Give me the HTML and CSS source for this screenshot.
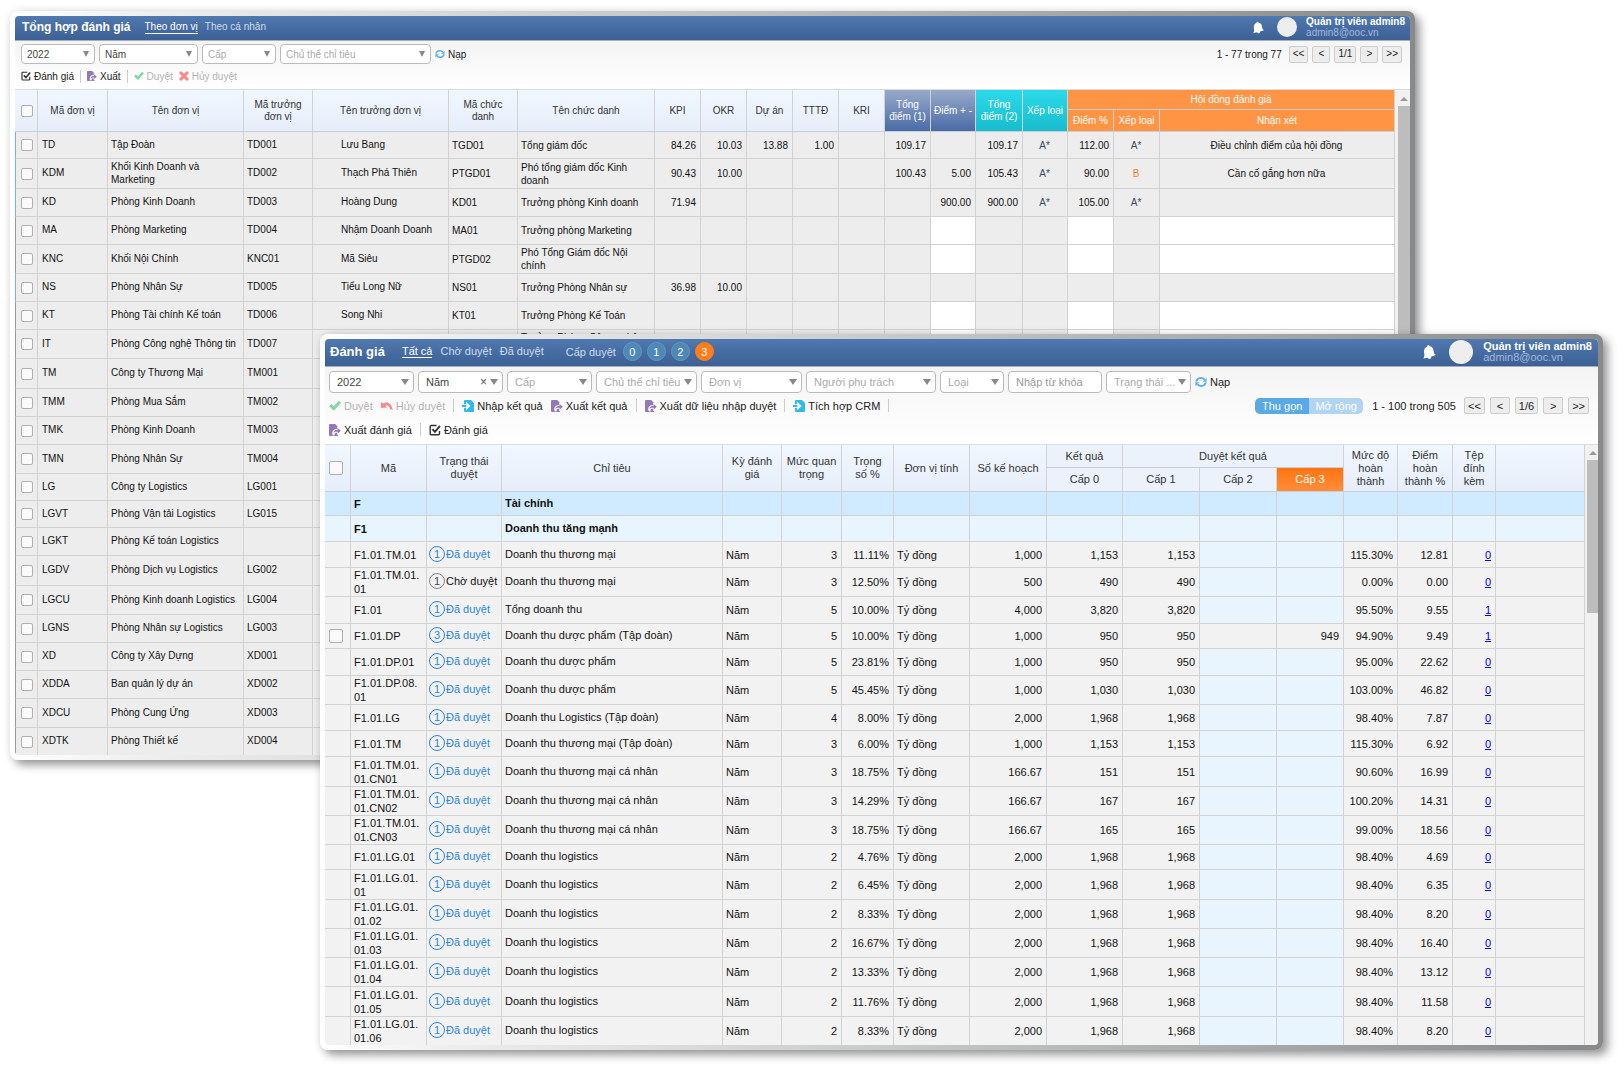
FILE: index.html
```html
<!DOCTYPE html>
<html lang="vi">
<head>
<meta charset="utf-8">
<title>Đánh giá</title>
<link rel="stylesheet" href="styles.css">
</head>
<body>
<svg class="sprite" aria-hidden="true">
  <symbol id="i-task" viewBox="0 0 12 12"><path d="M7.500 1.500H2.200a1 1 0 0 0-1 1v7.300a1 1 0 0 0 1 1h7.300a1 1 0 0 0 1-1V7" fill="none" stroke="#333" stroke-width="1.400"/><path d="M3.400 5.200l2.500 2.600L11 1.800" fill="none" stroke="#333" stroke-width="1.900"/></symbol>
  <symbol id="i-export" viewBox="0 0 12 12"><path d="M1 0h5.500l2.500 2.500V12H1a1 1 0 0 1-1-1V1a1 1 0 0 1 1-1z" fill="#9479b8"/><path d="M6 0l3.300 3.300H12V0z" fill="#fff" opacity=".6"/><path d="M12.600 6.800L8 2.400v2.500C5 4.900 3.200 6.500 3.200 9.200c0 1 .3 1.700 1 2.300h1.300C5.300 9.300 6 8.700 8 8.700v2.500z" fill="#fff"/><path d="M11.900 6.800L8.600 3.900v1.900C6 5.800 4.500 7 4.500 9.400 5.300 8 6.500 7.700 8.600 7.800v1.900z" fill="#9479b8"/></symbol>
  <symbol id="i-import" viewBox="0 0 12 12"><path d="M3 0h6l3 3v8a1 1 0 0 1-1 1H3a1 1 0 0 1-1-1V1a1 1 0 0 1 1-1z" fill="#2fb9ee"/><path d="M0 4.200h4V1.800L8.600 6 4 10.200V7.800H0z" fill="#fff"/><path d="M0 4.900h2.500c1.500 0 2.300.4 2.300 1.100S4 7.100 2.500 7.100H0z" fill="#2fb9ee"/></symbol>
  <symbol id="i-check" viewBox="0 0 12 12"><path d="M0 6.300L2.300 4l2.400 2.200L9.800 1 12 2.800 4.900 10.800z" fill="#86d7a8"/></symbol>
  <symbol id="i-cross" viewBox="0 0 12 12"><path d="M0 2.500L2.500 0 6 3.400 9.500 0 12 2.500 8.600 6 12 9.500 9.500 12 6 8.600 2.500 12 0 9.500 3.400 6z" fill="#f58b8b"/></symbol>
  <symbol id="i-undo" viewBox="0 0 12 12"><path d="M0 2l2 1.600C5.500 1.200 10.500 2.500 11.800 10l-2.600-.8C8.300 5.800 6.300 5 4.300 5.700L6 7.500 0 8z" fill="#f58b8b"/></symbol>
  <symbol id="i-refresh" viewBox="0 0 12 12"><path d="M1.300 5.600A4.600 3.900 0 0 1 9.700 3.800M10.700 6.400A4.600 3.900 0 0 1 2.300 8.200" fill="none" stroke="#62b0e8" stroke-width="1.900"/><path d="M11.600 2v3.800H7.500zM.4 10V6.200h4.100z" fill="#62b0e8"/></symbol>
  <symbol id="i-bell" viewBox="0 0 12 13"><path d="M4 .6C5 0 6 .5 6.200 1.200 8.500 1.500 9.600 3.200 9.800 5.400 10 7.500 10.500 8.500 12 9.400L7.500 10.900c.3 1-.2 1.800-1 2s-1.700-.2-2-1.100L.3 12.500C1.300 11 1.400 9.500 1 7.300.5 4.800 1.500 2.600 3.700 1.700z" fill="#fff"/></symbol>
</svg>
<main class="desk">

<section class="win win-back">
 <div class="pane">
  <header class="bar">
    <h1>Tổng hợp đánh giá</h1>
    <nav class="tabs"><a href="#" class="on">Theo đơn vị</a><a href="#">Theo cá nhân</a></nav>
    <div class="user"><svg class="bell"><use href="#i-bell"/></svg><span class="avatar"></span><div class="who"><b>Quản trị viên admin8</b><span>admin8@ooc.vn</span></div></div>
  </header>
  <div class="tools">
    <div class="filters">
      <div class="pick w-s"><select aria-label="Năm đánh giá"><option>2022</option></select></div>
      <div class="pick w-m"><select aria-label="Kỳ"><option>Năm</option></select></div>
      <div class="pick w-s hint"><select aria-label="Cấp"><option>Cấp</option></select></div>
      <div class="pick w-l hint"><select aria-label="Chủ thể chỉ tiêu"><option>Chủ thể chỉ tiêu</option></select></div>
      <button class="act"><svg><use href="#i-refresh"/></svg>Nạp</button>
      <div class="pager"><span>1 - 77 trong 77</span><button>&lt;&lt;</button><button>&lt;</button><button>1/1</button><button>&gt;</button><button>&gt;&gt;</button></div>
    </div>
    <div class="actions">
      <button class="act"><svg><use href="#i-task"/></svg>Đánh giá</button><i class="sep"></i>
      <button class="act"><svg><use href="#i-export"/></svg>Xuất</button><i class="sep"></i>
      <button class="act" disabled><svg><use href="#i-check"/></svg>Duyệt</button>
      <button class="act" disabled><svg><use href="#i-cross"/></svg>Hủy duyệt</button>
    </div>
  </div>
  <div class="sheet">
  <table class="grid units">
    <colgroup><col class="c23"><col class="c70"><col class="c136"><col class="c69"><col class="c136"><col class="c69"><col class="c137"><col class="c46"><col class="c46"><col class="c46"><col class="c46"><col class="c46"><col class="c46"><col class="c45"><col class="c47"><col class="c45"><col class="c46"><col class="c46"><col></colgroup>
    <thead>
      <tr><th rowspan="2"><input type="checkbox" aria-label="Chọn tất cả"></th><th rowspan="2">Mã đơn vị</th><th rowspan="2">Tên đơn vị</th><th rowspan="2">Mã trưởng đơn vị</th><th rowspan="2">Tên trưởng đơn vị</th><th rowspan="2">Mã chức<br>danh</th><th rowspan="2">Tên chức danh</th><th rowspan="2">KPI</th><th rowspan="2">OKR</th><th rowspan="2">Dự án</th><th rowspan="2">TTTĐ</th><th rowspan="2">KRI</th><th rowspan="2" class="slate">Tổng điểm (1)</th><th rowspan="2" class="slate">Điểm + -</th><th rowspan="2" class="cyan">Tổng điểm (2)</th><th rowspan="2" class="cyan">Xếp loại</th><th colspan="3" class="amber">Hội đồng đánh giá</th></tr>
      <tr><th class="amber">Điểm %</th><th class="amber">Xếp loại</th><th class="amber">Nhận xét</th></tr>
    </thead>
    <tbody>
      <tr class="h27 live"><td><input type="checkbox" aria-label="TD"></td><td>TD</td><td>Tập Đoàn</td><td>TD001</td><td>Lưu Bang</td><td>TGD01</td><td>Tổng giám đốc</td><td>84.26</td><td>10.03</td><td>13.88</td><td>1.00</td><td></td><td>109.17</td><td></td><td>109.17</td><td>A*</td><td>112.00</td><td>A*</td><td>Điều chỉnh điểm của hội đồng</td></tr>
      <tr class="h30 live"><td><input type="checkbox" aria-label="KDM"></td><td>KDM</td><td>Khối Kinh Doanh và Marketing</td><td>TD002</td><td>Thạch Phá Thiên</td><td>PTGD01</td><td>Phó tổng giám đốc Kinh doanh</td><td>90.43</td><td>10.00</td><td></td><td></td><td></td><td>100.43</td><td>5.00</td><td>105.43</td><td>A*</td><td>90.00</td><td class="low">B</td><td>Cần cố gắng hơn nữa</td></tr>
      <tr class="live"><td><input type="checkbox" aria-label="KD"></td><td>KD</td><td>Phòng Kinh Doanh</td><td>TD003</td><td>Hoàng Dung</td><td>KD01</td><td>Trưởng phòng Kinh doanh</td><td>71.94</td><td></td><td></td><td></td><td></td><td></td><td>900.00</td><td>900.00</td><td>A*</td><td>105.00</td><td>A*</td><td></td></tr>
      <tr class="open"><td><input type="checkbox" aria-label="MA"></td><td>MA</td><td>Phòng Marketing</td><td>TD004</td><td>Nhậm Doanh Doanh</td><td>MA01</td><td>Trưởng phòng Marketing</td><td></td><td></td><td></td><td></td><td></td><td></td><td></td><td></td><td></td><td></td><td></td><td></td></tr>
      <tr class="h29 open"><td><input type="checkbox" aria-label="KNC"></td><td>KNC</td><td>Khối Nội Chính</td><td>KNC01</td><td>Mã Siêu</td><td>PTGD02</td><td>Phó Tổng Giám đốc Nội chính</td><td></td><td></td><td></td><td></td><td></td><td></td><td></td><td></td><td></td><td></td><td></td><td></td></tr>
      <tr class="live"><td><input type="checkbox" aria-label="NS"></td><td>NS</td><td>Phòng Nhân Sự</td><td>TD005</td><td>Tiểu Long Nữ</td><td>NS01</td><td>Trưởng Phòng Nhân sự</td><td>36.98</td><td>10.00</td><td></td><td></td><td></td><td></td><td></td><td></td><td></td><td></td><td></td><td></td></tr>
      <tr class="open"><td><input type="checkbox" aria-label="KT"></td><td>KT</td><td>Phòng Tài chính Kế toán</td><td>TD006</td><td>Song Nhi</td><td>KT01</td><td>Trưởng Phòng Kế Toán</td><td></td><td></td><td></td><td></td><td></td><td></td><td></td><td></td><td></td><td></td><td></td><td></td></tr>
      <tr class="h29 open"><td><input type="checkbox" aria-label="IT"></td><td>IT</td><td>Phòng Công nghệ Thông tin</td><td>TD007</td><td></td><td></td><td>Trưởng Phòng Công nghệ Thông tin</td><td></td><td></td><td></td><td></td><td></td><td></td><td></td><td></td><td></td><td></td><td></td><td></td></tr>
      <tr class="h30"><td><input type="checkbox" aria-label="TM"></td><td>TM</td><td>Công ty Thương Mại</td><td>TM001</td><td colspan="15"></td></tr>
      <tr><td><input type="checkbox" aria-label="TMM"></td><td>TMM</td><td>Phòng Mua Sắm</td><td>TM002</td><td colspan="15"></td></tr>
      <tr><td><input type="checkbox" aria-label="TMK"></td><td>TMK</td><td>Phòng Kinh Doanh</td><td>TM003</td><td colspan="15"></td></tr>
      <tr class="h29"><td><input type="checkbox" aria-label="TMN"></td><td>TMN</td><td>Phòng Nhân Sự</td><td>TM004</td><td colspan="15"></td></tr>
      <tr class="h27"><td><input type="checkbox" aria-label="LG"></td><td>LG</td><td>Công ty Logistics</td><td>LG001</td><td colspan="15"></td></tr>
      <tr class="h27"><td><input type="checkbox" aria-label="LGVT"></td><td>LGVT</td><td>Phòng Vận tải Logistics</td><td>LG015</td><td colspan="15"></td></tr>
      <tr><td><input type="checkbox" aria-label="LGKT"></td><td>LGKT</td><td>Phòng Kế toán Logistics</td><td></td><td colspan="15"></td></tr>
      <tr class="h30"><td><input type="checkbox" aria-label="LGDV"></td><td>LGDV</td><td>Phòng Dịch vụ Logistics</td><td>LG002</td><td colspan="15"></td></tr>
      <tr class="h29"><td><input type="checkbox" aria-label="LGCU"></td><td>LGCU</td><td>Phòng Kinh doanh Logistics</td><td>LG004</td><td colspan="15"></td></tr>
      <tr><td><input type="checkbox" aria-label="LGNS"></td><td>LGNS</td><td>Phòng Nhân sự Logistics</td><td>LG003</td><td colspan="15"></td></tr>
      <tr><td><input type="checkbox" aria-label="XD"></td><td>XD</td><td>Công ty Xây Dựng</td><td>XD001</td><td colspan="15"></td></tr>
      <tr><td><input type="checkbox" aria-label="XDDA"></td><td>XDDA</td><td>Ban quản lý dự án</td><td>XD002</td><td colspan="15"></td></tr>
      <tr class="h29"><td><input type="checkbox" aria-label="XDCU"></td><td>XDCU</td><td>Phòng Cung Ứng</td><td>XD003</td><td colspan="15"></td></tr>
      <tr class="h27"><td><input type="checkbox" aria-label="XDTK"></td><td>XDTK</td><td>Phòng Thiết kế</td><td>XD004</td><td colspan="15"></td></tr>
    </tbody>
  </table>
  <div class="scroll"><span class="up"></span><span class="thumb"></span></div>
  </div>
 </div>
</section>

<section class="win win-front">
 <div class="pane">
  <header class="bar">
    <h1>Đánh giá</h1>
    <nav class="tabs"><a href="#" class="on">Tất cả</a><a href="#">Chờ duyệt</a><a href="#">Đã duyệt</a></nav>
    <div class="levels"><span>Cấp duyệt</span><button>0</button><button>1</button><button>2</button><button class="on">3</button></div>
    <div class="user"><svg class="bell"><use href="#i-bell"/></svg><span class="avatar"></span><div class="who"><b>Quản trị viên admin8</b><span>admin8@ooc.vn</span></div></div>
  </header>
  <div class="tools">
    <div class="filters">
      <div class="pick w-s"><select aria-label="Năm đánh giá"><option>2022</option></select></div>
      <div class="pick w-s"><select aria-label="Kỳ"><option>Năm</option></select><button class="clear" aria-label="Xóa">×</button></div>
      <div class="pick w-s hint"><select aria-label="Cấp"><option>Cấp</option></select></div>
      <div class="pick w-m hint"><select aria-label="Chủ thể chỉ tiêu"><option>Chủ thể chỉ tiêu</option></select></div>
      <div class="pick w-m hint"><select aria-label="Đơn vị"><option>Đơn vị</option></select></div>
      <div class="pick w-l hint"><select aria-label="Người phụ trách"><option>Người phụ trách</option></select></div>
      <div class="pick w-xs hint"><select aria-label="Loại"><option>Loại</option></select></div>
      <input class="find" type="text" placeholder="Nhập từ khóa" aria-label="Nhập từ khóa">
      <div class="pick w-s hint"><select aria-label="Trạng thái"><option>Trạng thái ...</option></select></div>
      <button class="act"><svg><use href="#i-refresh"/></svg>Nạp</button>
    </div>
    <div class="actions">
      <button class="act" disabled><svg><use href="#i-check"/></svg>Duyệt</button>
      <button class="act" disabled><svg><use href="#i-undo"/></svg>Hủy duyệt</button><i class="sep"></i>
      <button class="act"><svg><use href="#i-import"/></svg>Nhập kết quả</button>
      <button class="act"><svg><use href="#i-export"/></svg>Xuất kết quả</button><i class="sep"></i>
      <button class="act"><svg><use href="#i-export"/></svg>Xuất dữ liệu nhập duyệt</button><i class="sep"></i>
      <button class="act"><svg><use href="#i-import"/></svg>Tích hợp CRM</button><i class="sep"></i>
      <div class="pager"><div class="toggle"><button class="on">Thu gọn</button><button>Mở rộng</button></div><span>1 - 100 trong 505</span><button>&lt;&lt;</button><button>&lt;</button><button>1/6</button><button>&gt;</button><button>&gt;&gt;</button></div>
    </div>
    <div class="actions">
      <button class="act"><svg><use href="#i-export"/></svg>Xuất đánh giá</button><i class="sep"></i>
      <button class="act"><svg><use href="#i-task"/></svg>Đánh giá</button>
    </div>
  </div>
  <div class="sheet">
  <table class="grid goals">
    <colgroup><col class="c26"><col class="c76"><col class="c75"><col class="c221"><col class="c59"><col class="c60"><col class="c52"><col class="c76"><col class="c77"><col class="c76"><col class="c77"><col class="c77"><col class="c67"><col class="c54"><col class="c55"><col class="c43"><col></colgroup>
    <thead>
      <tr><th rowspan="2"><input type="checkbox" aria-label="Chọn tất cả"></th><th rowspan="2">Mã</th><th rowspan="2">Trạng thái duyệt</th><th rowspan="2">Chỉ tiêu</th><th rowspan="2">Kỳ đánh giá</th><th rowspan="2">Mức quan trọng</th><th rowspan="2">Trọng<br>số %</th><th rowspan="2">Đơn vị tính</th><th rowspan="2">Số kế hoạch</th><th>Kết quả</th><th colspan="3">Duyệt kết quả</th><th rowspan="2">Mức độ hoàn thành</th><th rowspan="2">Điểm hoàn thành %</th><th rowspan="2">Tệp đính kèm</th><th rowspan="2"></th></tr>
      <tr><th>Cấp 0</th><th>Cấp 1</th><th>Cấp 2</th><th class="hot">Cấp 3</th></tr>
    </thead>
    <tbody>
      <tr class="h24 group"><td></td><td>F</td><td></td><td>Tài chính</td><td></td><td></td><td></td><td></td><td></td><td></td><td></td><td></td><td></td><td></td><td></td><td></td><td></td></tr>
      <tr class="sub"><td></td><td>F1</td><td></td><td>Doanh thu tăng mạnh</td><td></td><td></td><td></td><td></td><td></td><td></td><td></td><td></td><td></td><td></td><td></td><td></td><td></td></tr>
      <tr><td></td><td>F1.01.TM.01</td><td><span class="st"><i>1</i>Đã duyệt</span></td><td>Doanh thu thương mại</td><td>Năm</td><td>3</td><td>11.11%</td><td>Tỷ đồng</td><td>1,000</td><td>1,153</td><td>1,153</td><td></td><td></td><td>115.30%</td><td>12.81</td><td><a href="#">0</a></td><td></td></tr>
      <tr class="h29"><td></td><td>F1.01.TM.01.<br>01</td><td><span class="st wait"><i>1</i>Chờ duyệt</span></td><td>Doanh thu thương mại</td><td>Năm</td><td>3</td><td>12.50%</td><td>Tỷ đồng</td><td>500</td><td>490</td><td>490</td><td></td><td></td><td>0.00%</td><td>0.00</td><td><a href="#">0</a></td><td></td></tr>
      <tr class="h27"><td></td><td>F1.01</td><td><span class="st"><i>1</i>Đã duyệt</span></td><td>Tổng doanh thu</td><td>Năm</td><td>5</td><td>10.00%</td><td>Tỷ đồng</td><td>4,000</td><td>3,820</td><td>3,820</td><td></td><td></td><td>95.50%</td><td>9.55</td><td><a href="#">1</a></td><td></td></tr>
      <tr class="h25 mine"><td><input type="checkbox" aria-label="F1.01.DP"></td><td>F1.01.DP</td><td><span class="st"><i>3</i>Đã duyệt</span></td><td>Doanh thu dược phẩm (Tập đoàn)</td><td>Năm</td><td>5</td><td>10.00%</td><td>Tỷ đồng</td><td>1,000</td><td>950</td><td>950</td><td></td><td>949</td><td>94.90%</td><td>9.49</td><td><a href="#">1</a></td><td></td></tr>
      <tr class="h27"><td></td><td>F1.01.DP.01</td><td><span class="st"><i>1</i>Đã duyệt</span></td><td>Doanh thu dược phẩm</td><td>Năm</td><td>5</td><td>23.81%</td><td>Tỷ đồng</td><td>1,000</td><td>950</td><td>950</td><td></td><td></td><td>95.00%</td><td>22.62</td><td><a href="#">0</a></td><td></td></tr>
      <tr class="h29"><td></td><td>F1.01.DP.08.<br>01</td><td><span class="st"><i>1</i>Đã duyệt</span></td><td>Doanh thu dược phẩm</td><td>Năm</td><td>5</td><td>45.45%</td><td>Tỷ đồng</td><td>1,000</td><td>1,030</td><td>1,030</td><td></td><td></td><td>103.00%</td><td>46.82</td><td><a href="#">0</a></td><td></td></tr>
      <tr><td></td><td>F1.01.LG</td><td><span class="st"><i>1</i>Đã duyệt</span></td><td>Doanh thu Logistics (Tập đoàn)</td><td>Năm</td><td>4</td><td>8.00%</td><td>Tỷ đồng</td><td>2,000</td><td>1,968</td><td>1,968</td><td></td><td></td><td>98.40%</td><td>7.87</td><td><a href="#">0</a></td><td></td></tr>
      <tr><td></td><td>F1.01.TM</td><td><span class="st"><i>1</i>Đã duyệt</span></td><td>Doanh thu thương mại (Tập đoàn)</td><td>Năm</td><td>3</td><td>6.00%</td><td>Tỷ đồng</td><td>1,000</td><td>1,153</td><td>1,153</td><td></td><td></td><td>115.30%</td><td>6.92</td><td><a href="#">0</a></td><td></td></tr>
      <tr class="h30"><td></td><td>F1.01.TM.01.<br>01.CN01</td><td><span class="st"><i>1</i>Đã duyệt</span></td><td>Doanh thu thương mại cá nhân</td><td>Năm</td><td>3</td><td>18.75%</td><td>Tỷ đồng</td><td>166.67</td><td>151</td><td>151</td><td></td><td></td><td>90.60%</td><td>16.99</td><td><a href="#">0</a></td><td></td></tr>
      <tr class="h29"><td></td><td>F1.01.TM.01.<br>01.CN02</td><td><span class="st"><i>1</i>Đã duyệt</span></td><td>Doanh thu thương mại cá nhân</td><td>Năm</td><td>3</td><td>14.29%</td><td>Tỷ đồng</td><td>166.67</td><td>167</td><td>167</td><td></td><td></td><td>100.20%</td><td>14.31</td><td><a href="#">0</a></td><td></td></tr>
      <tr class="h29"><td></td><td>F1.01.TM.01.<br>01.CN03</td><td><span class="st"><i>1</i>Đã duyệt</span></td><td>Doanh thu thương mại cá nhân</td><td>Năm</td><td>3</td><td>18.75%</td><td>Tỷ đồng</td><td>166.67</td><td>165</td><td>165</td><td></td><td></td><td>99.00%</td><td>18.56</td><td><a href="#">0</a></td><td></td></tr>
      <tr class="h25"><td></td><td>F1.01.LG.01</td><td><span class="st"><i>1</i>Đã duyệt</span></td><td>Doanh thu logistics</td><td>Năm</td><td>2</td><td>4.76%</td><td>Tỷ đồng</td><td>2,000</td><td>1,968</td><td>1,968</td><td></td><td></td><td>98.40%</td><td>4.69</td><td><a href="#">0</a></td><td></td></tr>
      <tr class="h30"><td></td><td>F1.01.LG.01.<br>01</td><td><span class="st"><i>1</i>Đã duyệt</span></td><td>Doanh thu logistics</td><td>Năm</td><td>2</td><td>6.45%</td><td>Tỷ đồng</td><td>2,000</td><td>1,968</td><td>1,968</td><td></td><td></td><td>98.40%</td><td>6.35</td><td><a href="#">0</a></td><td></td></tr>
      <tr class="h29"><td></td><td>F1.01.LG.01.<br>01.02</td><td><span class="st"><i>1</i>Đã duyệt</span></td><td>Doanh thu logistics</td><td>Năm</td><td>2</td><td>8.33%</td><td>Tỷ đồng</td><td>2,000</td><td>1,968</td><td>1,968</td><td></td><td></td><td>98.40%</td><td>8.20</td><td><a href="#">0</a></td><td></td></tr>
      <tr class="h29"><td></td><td>F1.01.LG.01.<br>01.03</td><td><span class="st"><i>1</i>Đã duyệt</span></td><td>Doanh thu logistics</td><td>Năm</td><td>2</td><td>16.67%</td><td>Tỷ đồng</td><td>2,000</td><td>1,968</td><td>1,968</td><td></td><td></td><td>98.40%</td><td>16.40</td><td><a href="#">0</a></td><td></td></tr>
      <tr class="h29"><td></td><td>F1.01.LG.01.<br>01.04</td><td><span class="st"><i>1</i>Đã duyệt</span></td><td>Doanh thu logistics</td><td>Năm</td><td>2</td><td>13.33%</td><td>Tỷ đồng</td><td>2,000</td><td>1,968</td><td>1,968</td><td></td><td></td><td>98.40%</td><td>13.12</td><td><a href="#">0</a></td><td></td></tr>
      <tr class="h30"><td></td><td>F1.01.LG.01.<br>01.05</td><td><span class="st"><i>1</i>Đã duyệt</span></td><td>Doanh thu logistics</td><td>Năm</td><td>2</td><td>11.76%</td><td>Tỷ đồng</td><td>2,000</td><td>1,968</td><td>1,968</td><td></td><td></td><td>98.40%</td><td>11.58</td><td><a href="#">0</a></td><td></td></tr>
      <tr class="h28"><td></td><td>F1.01.LG.01.<br>01.06</td><td><span class="st"><i>1</i>Đã duyệt</span></td><td>Doanh thu logistics</td><td>Năm</td><td>2</td><td>8.33%</td><td>Tỷ đồng</td><td>2,000</td><td>1,968</td><td>1,968</td><td></td><td></td><td>98.40%</td><td>8.20</td><td><a href="#">0</a></td><td></td></tr>
    </tbody>
  </table>
  <div class="scroll"><span class="up"></span><span class="thumb"></span></div>
  </div>
 </div>
</section>
</main>
</body>
</html>
```
FILE: styles.css
```css
* { box-sizing: border-box; }
body { margin: 0; background: #fff; color: #111; font-family: "Liberation Sans", Arial, sans-serif; }
button, input, select { font: inherit; color: inherit; margin: 0; padding: 0; }
button { background: none; border: 0; white-space: nowrap; }
.sprite { display: none; }

/* two overlapping windows on a free canvas */
.desk { position: relative; min-height: 100vh; overflow: hidden; }
.win {
  position: absolute; padding: 5px; border-radius: 8px;
  background: linear-gradient(to right, #fff 0, #eee 10%, #cfd0d0 38%, #a5a6a7 75%, #87898b 100%);
  box-shadow: 5px 5px 10px rgba(0, 0, 0, .38), 0 0 8px rgba(0, 0, 0, .1);
}
.win-back { left: 10px; right: 209px; top: 11px; font-size: 10px; line-height: 13px; }
.win-front { left: 320px; right: 21px; top: 334px; font-size: 11px; line-height: 14px; }
.pane { border-radius: 4px; overflow: hidden; background: #fff; }

/* title bar */
.bar {
  display: flex; align-items: center; height: 25px; padding: 0 5px 2px 7px; color: #fff;
  background: linear-gradient(#5079b0, #3b6094); border-bottom: 1px solid #a9b0ba;
}
.bar h1 { margin: 0 14px 0 0; font-size: 12px; line-height: 16px; }
.tabs { display: flex; gap: 7px; }
.tabs a { color: #d0dcee; text-decoration: none; line-height: 12px; border-bottom: 1px solid transparent; }
.tabs .on { color: #fff; border-color: #fff; }
.user { display: flex; align-items: center; margin-left: auto; }
.bell { width: 11px; height: 13px; margin-right: 13px; }
.avatar { width: 20px; height: 20px; border-radius: 50%; background: #eee; margin-right: 9px; }
.who { display: flex; flex-direction: column; line-height: 11px; }
.who span { color: #a3b6de; }
.win-front .bar { height: 28px; padding: 0 6px 2px 5px; }
.win-front h1 { font-size: 13px; margin-right: 17px; }
.win-front .tabs { gap: 8px; }
.win-front .bell { width: 13px; height: 14px; }
.win-front .avatar { width: 24px; height: 24px; margin-right: 10px; }
.levels { display: flex; align-items: center; gap: 5px; margin-left: 22px; color: #d0dcee; }
.levels span { margin-right: 2px; }
.levels button { width: 19px; height: 19px; border-radius: 50%; background: #4d88b6; border: 1px solid #6399c4; color: #fff; }
.levels .on { background: #ff7d1a; border-color: #ff7d1a; }

/* filters and actions */
.tools { display: flex; flex-direction: column; background: linear-gradient(#f4f4f4, #fff); border-bottom: 1px solid #d9dde2; color: #222; }
.win-back .tools { padding: 3px 8px 6px 6px; gap: 5px; }
.filters, .actions { display: flex; align-items: center; }
.filters { gap: 4px; }
.win-back .actions { height: 14px; gap: 6px; }
.pick { display: grid; align-items: center; height: 20px; }
.pick > *, .pick::after { grid-area: 1 / 1; }
.pick::after {
  content: ""; justify-self: end; margin-right: 6px; pointer-events: none;
  border: 3px solid transparent; border-top: 6px solid #888; border-bottom: 0;
}
.pick select { appearance: none; width: 100%; height: 100%; padding: 0 5px; background: #fff; border: 1px solid #bbb; border-radius: 4px; color: #444; }
.hint select { color: #aaa; }
.win-back .w-s { width: 74px; }
.win-back .w-m { width: 99px; }
.win-back .w-l { width: 151px; }
.win-front .pick, .find { height: 22px; }
.win-front .pick::after { border-width: 6px 4px 0; margin-right: 5px; }
.win-front .pick select { padding: 0 7px; }
.win-front .w-xs { width: 64px; }
.win-front .w-s { width: 85px; }
.win-front .w-m { width: 101px; }
.win-front .w-l { width: 130px; }
.clear { justify-self: end; margin-right: 16px; font-size: 12px; color: #555; }
.find { width: 94px; padding: 0 7px; background: #fff; border: 1px solid #bbb; border-radius: 4px; }
.find::placeholder { color: #999; opacity: 1; }
.act { display: flex; align-items: center; gap: 3px; }
.act svg { width: 10px; height: 10px; }
.act:disabled { color: #b5b5b5; }
.sep { width: 1px; height: 13px; background: #ccc; }
.win-front .tools { padding: 4px 9px 3px 4px; gap: 1px; }
.win-front .actions { height: 23px; gap: 8px; }
.win-front .act svg { width: 12px; height: 12px; }

.pager { display: flex; align-items: center; gap: 4px; margin-left: auto; }
.pager > span { margin-right: 3px; }
.pager > button { min-width: 18px; height: 17px; padding: 0 3px; background: #ededed; border: 1px solid #ccc; border-radius: 2px; line-height: 14px; }
.win-front .pager { gap: 5px; }
.win-front .pager > button { min-width: 20px; }
.win-front .pager > span { margin: 0 3px 0 4px; }
.toggle { display: flex; border-radius: 5px; overflow: hidden; color: #fff; }
.toggle button { width: 54px; height: 16px; background: #afd5f3; }
.toggle .on { background: #58a9e6; }

/* data tables */
.sheet { display: flex; }
.grid { flex: 1; width: 0; table-layout: fixed; border-collapse: separate; border-spacing: 0; }
.grid th, .grid td { border-right: 1px solid #d2d2d2; border-bottom: 1px solid #d2d2d2; padding: 0 4px; text-align: left; overflow: hidden; }
.grid th { text-align: center; font-weight: normal; color: #333; padding: 0 2px; border-bottom-color: #c9ced6; background: #ebf2fc; }
.grid thead th[rowspan] { background: linear-gradient(#f1f7ff, #e6eefa); }
.grid input { appearance: none; display: block; width: 12px; height: 12px; margin: 0 0 0 5px; background: #fafafa; border: 1px solid #b0b0b0; border-radius: 2px; }
.grid tr > :first-child:has(input) { padding: 0; }
.grid tbody tr:last-child td { border-bottom: 0; }

.units th { line-height: 12px; }
.units thead tr:first-child { height: 20px; }
.units thead tr:last-child { height: 22px; }
.units td { background: #ededed; line-height: 13px; }
.units tbody tr { height: 28px; }
.units td:first-child { border-left: 1px solid #999; }
.units th:first-child:has(input) { padding-left: 1px; }
.units .live td:first-child { border-left-color: #6fb3ea; }
.units td:nth-child(n+3) { padding-left: 3px; }
.units td:nth-child(n+2):nth-child(-n+5) { padding-bottom: 2px; }
.units td:nth-child(5) { padding-left: 28px; }
.units td:nth-child(n+8) { text-align: right; }
.units td:nth-child(16), .units td:nth-child(18), .units td:nth-child(19) { text-align: center; color: #3c4a63; }
.units td:nth-child(19) { color: #111; }
.units td.low { color: #ee8432; }
.units .open td:nth-child(14), .units .open td:nth-child(17), .units .open td:nth-child(19) { background: #fff; }
.units thead th.slate, .units thead th.cyan, .units thead th.amber { padding: 0; color: #fff; }
.units thead th.slate { background: linear-gradient(#98aaca, #4a6ba6); }
.units thead th.cyan { background: linear-gradient(#2bdaea, #18bccc); }
.units thead th.amber { background: #ff9445; }

.goals th { line-height: 13px; }
.goals thead tr:first-child { height: 23px; }
.goals thead tr:last-child { height: 24px; }
.goals td { background: #f2f2f2; line-height: 14px; padding: 0 4px 0 3px; }
.goals tbody tr { height: 26px; }
.goals td:nth-child(3) { padding: 0 0 2px 2px; }
.goals td:nth-child(4) { padding-bottom: 2px; }
.goals td:nth-child(6), .goals td:nth-child(7), .goals td:nth-child(n+9) { text-align: right; }
.goals td:nth-child(12), .goals td:nth-child(13) { background: #e8f5ff; }
.goals .mine td { background: #f2f2f2; }
.goals .group td { background: #d0eaff; font-weight: bold; }
.goals .sub td { background: #e8f5ff; font-weight: bold; }
.goals thead th.hot { background: linear-gradient(#ff7410, #ff8d3a); color: #fff; }
.goals td a { color: #00e; }
.goals input { width: 14px; height: 14px; margin-left: 4px; }
.st { display: flex; align-items: center; gap: 1px; color: #2a86dc; white-space: nowrap; }
.st i { display: grid; place-items: center; width: 16px; height: 16px; border: 1px solid #2a86dc; border-radius: 50%; font-style: normal; }
.wait { color: #111; }
.wait i { border-color: #888; color: #444; }

.grid tbody .h24 { height: 24px; }
.grid tbody .h25 { height: 25px; }
.grid tbody .h27 { height: 27px; }
.grid tbody .h28 { height: 28px; }
.grid tbody .h29 { height: 29px; }
.grid tbody .h30 { height: 30px; }

.c23 { width: 23px; } .c26 { width: 26px; } .c43 { width: 43px; } .c45 { width: 45px; }
.c46 { width: 46px; } .c47 { width: 47px; } .c52 { width: 52px; } .c54 { width: 54px; }
.c55 { width: 55px; } .c59 { width: 59px; } .c60 { width: 60px; } .c67 { width: 67px; }
.c69 { width: 69px; } .c70 { width: 70px; } .c75 { width: 75px; } .c76 { width: 76px; }
.c77 { width: 77px; } .c136 { width: 136px; } .c137 { width: 137px; } .c221 { width: 221px; }

/* scroll bars */
.scroll { display: flex; flex-direction: column; align-items: center; width: 15px; padding-left: 3px; background: #f1f1f1; }
.win-front .scroll { width: 13px; padding-left: 2px; }
.up { margin: 7px 0 5px; border: 4px solid transparent; border-bottom-color: #999; border-top: 0; }
.thumb { width: 100%; flex: 1; background: #bdbdbd; }
.win-front .up { margin: 6px 0 5px; }
.win-front .thumb { flex: none; height: 153px; }
```
